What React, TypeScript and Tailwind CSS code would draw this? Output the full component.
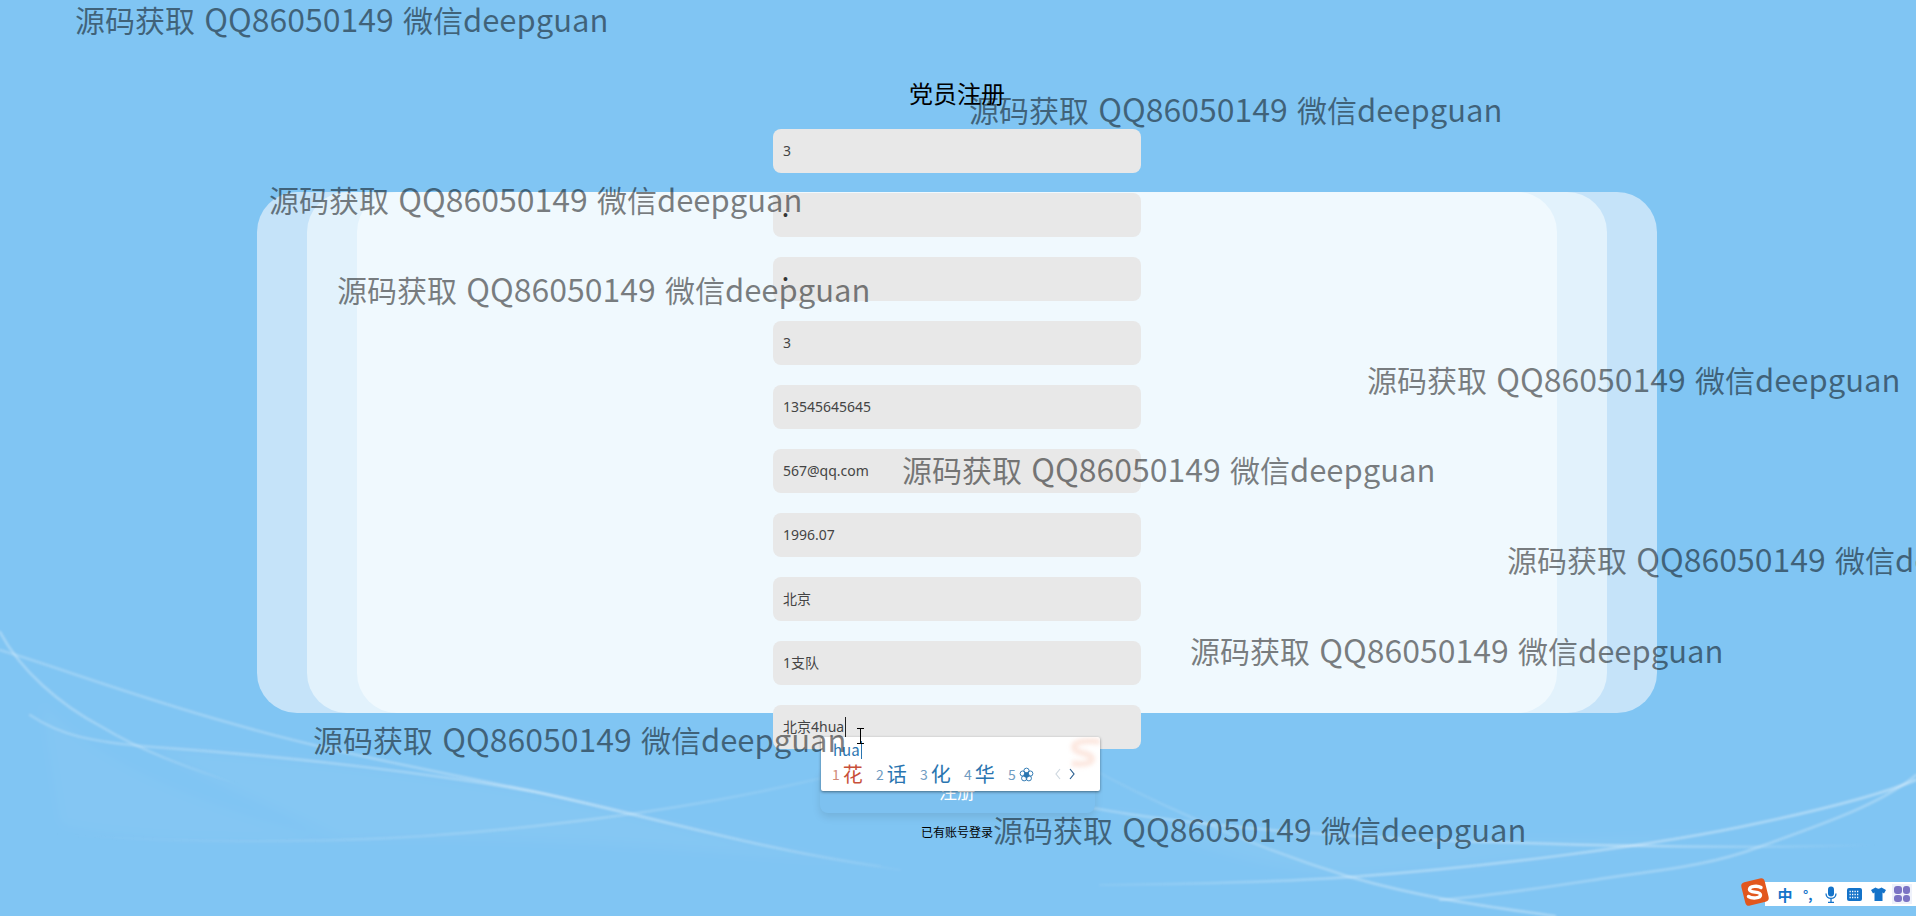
import React from 'react'

const fields = [
  { value: '3', type: 'text' },
  { value: '1', type: 'password' },
  { value: '1', type: 'password' },
  { value: '3', type: 'text' },
  { value: '13545645645', type: 'text' },
  { value: '567@qq.com', type: 'text' },
  { value: '1996.07', type: 'text' },
  { value: '北京', type: 'text' },
  { value: '1支队', type: 'text' },
  { value: '北京4hua', type: 'text' },
]

const watermarks = [
  { left: 75, top: -3 },
  { left: 969, top: 87 },
  { left: 269, top: 177 },
  { left: 337, top: 267 },
  { left: 1367, top: 357 },
  { left: 902, top: 447 },
  { left: 1507, top: 537 },
  { left: 1190, top: 628 },
  { left: 313, top: 717 },
  { left: 993, top: 807 },
]

const candidates = [
  { n: '1', text: '花', color: 'text-[#c8503a]', numColor: 'text-[#d08a78]' },
  { n: '2', text: '话', color: 'text-[#2a75b0]', numColor: 'text-[#6f9cc2]' },
  { n: '3', text: '化', color: 'text-[#2a75b0]', numColor: 'text-[#6f9cc2]' },
  { n: '4', text: '华', color: 'text-[#2a75b0]', numColor: 'text-[#6f9cc2]' },
]

const lines = [
  { d: 'M0 632C20 670 60 705 102 727C140 750 180 765 240 785', id: 'fadeA', o: 0.35 },
  { d: 'M0 650C60 668 130 695 230 723C330 752 430 770 536 792C640 815 760 850 900 870', id: 'fadeL', o: 0.32 },
  { d: 'M30 715C60 735 90 742 153 747C300 757 440 775 536 792C650 815 760 850 880 866', id: 'fadeL', o: 0.32 },
  { d: 'M51 833C150 842 260 842 340 840C480 836 660 815 800 783C870 768 920 748 960 735', id: 'fadeB', o: 0.28 },
  { d: 'M1085 765C1130 790 1230 840 1350 877C1430 900 1500 908 1555 916', id: 'fadeR', o: 0.4 },
  { d: 'M1093 808C1200 828 1380 840 1526 843C1640 847 1760 848 1876 845', id: 'fadeS', o: 0.4 },
  { d: 'M1100 885C1200 884 1280 882 1350 877C1480 868 1660 845 1759 823C1820 810 1880 795 1916 780', id: 'fadeR', o: 0.42 },
  { d: 'M1440 900C1500 895 1560 885 1613 877C1680 868 1720 862 1759 847C1820 825 1880 805 1916 775', id: 'fadeR', o: 0.32 },
]

function Waves() {
  return (
    <svg className="absolute inset-0 h-[916px] w-[1916px]" viewBox="0 0 1916 916" fill="none">
      <defs>
        <linearGradient id="fadeA" gradientUnits="userSpaceOnUse" x1="0" y1="0" x2="240" y2="0">
          <stop offset="0" stopColor="#fff" stopOpacity="0.9" />
          <stop offset="0.6" stopColor="#fff" stopOpacity="0.7" />
          <stop offset="1" stopColor="#fff" stopOpacity="0" />
        </linearGradient>
        <linearGradient id="fadeL" gradientUnits="userSpaceOnUse" x1="0" y1="0" x2="960" y2="0">
          <stop offset="0" stopColor="#fff" stopOpacity="0.7" />
          <stop offset="0.55" stopColor="#fff" stopOpacity="0.9" />
          <stop offset="1" stopColor="#fff" stopOpacity="0" />
        </linearGradient>
        <linearGradient id="fadeB" gradientUnits="userSpaceOnUse" x1="51" y1="0" x2="960" y2="0">
          <stop offset="0" stopColor="#fff" stopOpacity="0" />
          <stop offset="0.6" stopColor="#fff" stopOpacity="0.8" />
          <stop offset="1" stopColor="#fff" stopOpacity="0" />
        </linearGradient>
        <linearGradient id="fadeR" gradientUnits="userSpaceOnUse" x1="1085" y1="0" x2="1916" y2="0">
          <stop offset="0" stopColor="#fff" stopOpacity="0.15" />
          <stop offset="0.35" stopColor="#fff" stopOpacity="0.8" />
          <stop offset="1" stopColor="#fff" stopOpacity="0.9" />
        </linearGradient>
        <linearGradient id="fadeS" gradientUnits="userSpaceOnUse" x1="1093" y1="0" x2="1876" y2="0">
          <stop offset="0" stopColor="#fff" stopOpacity="0.6" />
          <stop offset="0.7" stopColor="#fff" stopOpacity="0.9" />
          <stop offset="1" stopColor="#fff" stopOpacity="0" />
        </linearGradient>
      </defs>
      {/* faint mesh between the ribbons */}
      <g className="blur-[6px]" fill="#ffffff">
        <path d="M40 700C120 790 300 830 340 840C200 842 120 838 60 825Z" fillOpacity="0.03" />
        <path d="M153 747C300 757 440 775 536 792C650 815 760 850 880 866C700 850 500 835 340 840C280 810 200 780 153 747Z" fillOpacity="0.04" />
        <path d="M1100 810C1220 860 1280 870 1350 877C1480 868 1660 845 1759 823C1640 847 1380 845 1100 810Z" fillOpacity="0.04" />
      </g>
      <g className="blur-[0.8px]" strokeLinecap="round" strokeWidth="2.5">
        {lines.map((l) => (
          <path key={l.d} d={l.d} stroke={`url(#${l.id})`} strokeOpacity={l.o} />
        ))}
      </g>
    </svg>
  )
}

function ImeWindow() {
  return (
    <div className="absolute left-[821px] top-[737px] h-[54px] w-[279px] overflow-hidden rounded-[2px] bg-white shadow-[0_1px_3px_rgba(0,0,0,0.45)]">
      <svg className="absolute right-0 top-0 h-[40px] w-[40px] blur-[2px]" viewBox="0 0 40 40" fill="none">
        <path d="M42 5C28 3 14 4 14 10C14 17 32 15 32 22C32 27 20 28 12 26" stroke="#f4a88c" strokeOpacity="0.28" strokeWidth="6" />
      </svg>
      <div className="relative flex h-[22px] items-center pl-[12px] pt-[3px] text-[15px] leading-none text-[#2a75b0]">
        hua
        <span className="ml-[1px] h-[18px] w-px bg-[#2a75b0]" />
      </div>
      <div className="relative flex h-[30px] items-center pl-[11px]">
        {candidates.map((c) => (
          <div key={c.n} className="flex w-[44px] items-center gap-[3px]">
            <span className={`text-[14px] leading-none ${c.numColor}`}>{c.n}</span>
            <span className={`text-[20px] leading-none ${c.color}`}>{c.text}</span>
          </div>
        ))}
        <div className="flex w-[44px] items-center gap-[3px]">
          <span className="text-[14px] leading-none text-[#6f9cc2]">5</span>
          <svg className="h-[15px] w-[15px]" viewBox="0 0 16 16" fill="none" stroke="#2a75b0" strokeWidth="1">
            <circle cx="8" cy="4" r="2.8" />
            <circle cx="12" cy="7" r="2.8" />
            <circle cx="10.5" cy="12" r="2.8" />
            <circle cx="5.5" cy="12" r="2.8" />
            <circle cx="4" cy="7" r="2.8" />
            <circle cx="8" cy="8.5" r="2.6" fill="#2a75b0" />
          </svg>
        </div>
        <svg className="ml-[3px] h-[12px] w-[6px]" viewBox="0 0 6 12" fill="none" stroke="#cfd8e0" strokeWidth="1.2">
          <path d="M5 1L1 6L5 11" />
        </svg>
        <svg className="ml-[8px] h-[12px] w-[6px]" viewBox="0 0 6 12" fill="none" stroke="#2a5f90" strokeWidth="1.2">
          <path d="M1 1L5 6L1 11" />
        </svg>
      </div>
    </div>
  )
}

function ImeBar() {
  return (
    <div className="absolute left-[1740px] top-[878px] flex h-[28px] w-[176px] items-center">
      <div className="absolute left-[25px] right-0 top-[4px] h-[24px] bg-white" />
      <svg className="relative h-[30px] w-[30px]" viewBox="0 0 30 30">
        <rect x="3" y="3" width="24" height="24" rx="4" fill="#e2571e" transform="rotate(-14 15 15)" />
        <path d="M21 10.5C18 8.5 9.5 8.8 9.5 12.5C9.5 16.5 20.5 13.8 20.5 18C20.5 21.5 12 21.8 8.5 19.5" fill="none" stroke="#fff" strokeWidth="3.4" strokeLinecap="round" />
      </svg>
      <div className="relative flex flex-1 items-center pl-[7px] pt-[4px] text-[#1473c9]">
        <span className="w-[16px] text-center text-[15px] font-bold leading-none">中</span>
        <span className="ml-[10px] w-[14px] text-[13px] font-bold leading-none">°,</span>
        <svg className="ml-[8px] h-[17px] w-[12px]" viewBox="0 0 12 17" fill="none" stroke="#1473c9" strokeWidth="1.3">
          <rect x="3" y="0.5" width="6" height="10" rx="3" fill="#1473c9" stroke="none" />
          <path d="M1 7.5C1 14 11 14 11 7.5M6 12.5V16.5M3 16.5H9" />
        </svg>
        <svg className="ml-[10px] h-[13px] w-[15px]" viewBox="0 0 15 13">
          <rect width="15" height="13" rx="2" fill="#1473c9" />
          <path d="M2.5 3.5H12.5M2.5 6.5H12.5M2.5 9.5H12.5" stroke="#fff" strokeWidth="1.3" strokeDasharray="1.3 1.2" />
        </svg>
        <svg className="ml-[9px] h-[14px] w-[15px]" viewBox="0 0 15 14">
          <path d="M4.5 0.5C6 2 9 2 10.5 0.5L15 3L13 6.5L11.5 5.5V14H3.5V5.5L2 6.5L0 3Z" fill="#1473c9" />
        </svg>
        <div className="ml-[6px] grid h-[20px] w-[20px] grid-cols-2 gap-[1px] bg-[#eef1fb] p-[2px]">
          <span className="rounded-[3px] bg-[#7b74c4]" />
          <span className="rounded-[3px] bg-[#7b74c4]" />
          <span className="rounded-[3px] bg-[#7b74c4]" />
          <span className="rounded-[3px] bg-[#7b74c4]" />
        </div>
      </div>
    </div>
  )
}

export default function App() {
  return (
    <div
      className="relative h-[916px] w-full overflow-hidden bg-[#80c5f3] text-black"
      style={{ fontFamily: '"Noto Sans CJK SC", "Noto Sans", sans-serif' }}
    >
      <Waves />

      {/* stacked cards behind the form */}
      <div className="absolute left-[257px] top-[192px] h-[521px] w-[1400px] rounded-[40px] bg-[#c5e3f9]" />
      <div className="absolute left-[307px] top-[192px] h-[521px] w-[1300px] rounded-[40px] bg-[#e2f2fc]" />
      <div className="absolute left-[357px] top-[192px] h-[521px] w-[1200px] rounded-[40px] bg-[#f0f9fe]" />

      <div className="relative flex flex-col items-center pr-[2px] pt-[75px]">
        <h1 className="mb-[18px] h-[36px] text-[24px] font-normal leading-[36px]">党员注册</h1>

        <div className="flex w-[368px] flex-col gap-[20px]">
          {fields.map((f, i) => (
            <input
              key={i}
              type={f.type}
              value={f.value}
              readOnly
              className={
                f.type === 'password'
                  ? "h-[44px] w-full rounded-[8px] bg-[#e8e8e8] px-[10px] font-['Liberation_Sans'] text-[14px] text-[#333] outline-none"
                  : "h-[44px] w-full rounded-[8px] bg-[#e8e8e8] px-[10px] pb-[2px] font-['Noto_Sans','Noto_Sans_CJK_SC',sans-serif] text-[14px] text-[#444] outline-none"
              }
            />
          ))}
        </div>

        <button className="mt-[20px] h-[44px] w-[275px] rounded-[8px] bg-[#7dc1f0] text-[18px] text-white shadow-[0_4px_8px_rgba(0,0,0,0.1)]">
          注册
        </button>
        <a className="mt-[10px] text-[12px] leading-[18px] text-black">已有账号登录</a>
      </div>

      {/* caret in the last field */}
      <div className="absolute left-[845px] top-[717px] h-[21px] w-px bg-[#222]" />

      <ImeWindow />

      {/* mouse i-beam */}
      <div className="absolute left-[857px] top-[728px] h-[16px] w-[7px] border-y border-black">
        <div className="mx-auto h-full w-px bg-black" />
      </div>

      {watermarks.map((w) => (
        <div
          key={w.left}
          className="pointer-events-none absolute whitespace-nowrap text-[32px] leading-[42px] text-black/50"
          style={{ left: w.left, top: w.top }}
        >
          <span className="text-[30px]">源码获取</span>{' '}
          <span className="ml-[2px]">QQ86050149</span>{' '}
          <span className="ml-[2px] text-[30px]">微信</span>
          <span className="text-[31px]">deepguan</span>
        </div>
      ))}

      <ImeBar />
    </div>
  )
}
